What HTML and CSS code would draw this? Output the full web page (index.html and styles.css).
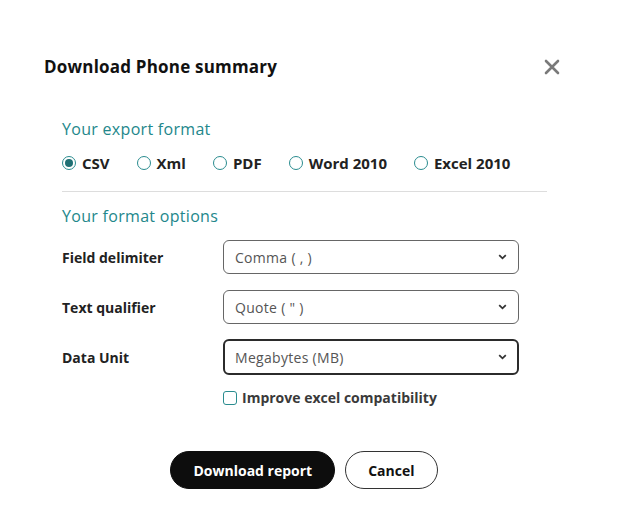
FILE: index.html
```html
<!DOCTYPE html>
<html lang="en">
<head>
    <meta charset="UTF-8">
    <meta name="viewport" content="width=device-width, initial-scale=1.0">
    <title>Download Phone summary</title>
    <link rel="stylesheet" href="styles.css">
</head>
<body>
    <div class="dialog">
        <div class="dialog-header">
            <h1>Download Phone summary</h1>
            <span class="close">
                <svg width="16" height="16" viewBox="0 0 16 16">
                    <path d="M2 2 L14 14 M14 2 L2 14" stroke="#7a7a7a" stroke-width="2.6" stroke-linecap="round"/>
                </svg>
            </span>
        </div>

        <div class="dialog-body">
            <h2>Your export format</h2>
            <div class="formats">
                <label class="radio checked"><span class="dot"></span>CSV</label>
                <label class="radio"><span class="dot"></span>Xml</label>
                <label class="radio"><span class="dot"></span>PDF</label>
                <label class="radio"><span class="dot"></span>Word 2010</label>
                <label class="radio"><span class="dot"></span>Excel 2010</label>
            </div>

            <hr class="divider">

            <h2>Your format options</h2>
            <div class="options">
                <div class="field">
                    <span class="field-label">Field delimiter</span>
                    <div class="select">
                        <span>Comma ( , )</span>
                        <svg width="9" height="6" viewBox="0 0 9 6"><path d="M1.2 1.2 L4.5 4.3 L7.8 1.2" fill="none" stroke="#333" stroke-width="1.8"/></svg>
                    </div>
                </div>
                <div class="field">
                    <span class="field-label">Text qualifier</span>
                    <div class="select">
                        <span>Quote ( " )</span>
                        <svg width="9" height="6" viewBox="0 0 9 6"><path d="M1.2 1.2 L4.5 4.3 L7.8 1.2" fill="none" stroke="#333" stroke-width="1.8"/></svg>
                    </div>
                </div>
                <div class="field">
                    <span class="field-label">Data Unit</span>
                    <div class="select focused">
                        <span>Megabytes (MB)</span>
                        <svg width="9" height="6" viewBox="0 0 9 6"><path d="M1.2 1.2 L4.5 4.3 L7.8 1.2" fill="none" stroke="#333" stroke-width="1.8"/></svg>
                    </div>
                </div>
                <label class="checkbox"><span class="box"></span>Improve excel compatibility</label>
            </div>
        </div>

        <div class="dialog-footer">
            <button class="btn primary">Download report</button>
            <button class="btn secondary">Cancel</button>
        </div>
    </div>
</body>
</html>
```

FILE: styles.css
```css
body {
    margin: 0;
    padding: 0;
    background-color: #fff;
    font-family: "Open Sans", Arial, sans-serif;
    color: #222;
}
.dialog {
    width: 516px;
    padding: 56px 0 0 44px;
}
.dialog-header {
    display: flex;
    justify-content: space-between;
    align-items: center;
}
.dialog-header h1 {
    margin: 0;
    font-size: 17px;
    line-height: 22px;
    font-weight: 700;
    letter-spacing: 0.2px;
    color: #111;
}
.close {
    display: flex;
    cursor: pointer;
}
.dialog-body {
    padding: 0 13px 0 18px;
}
.dialog-body h2 {
    margin: 0;
    font-size: 16px;
    line-height: 22px;
    font-weight: 400;
    letter-spacing: 0.3px;
    color: #23878b;
}
.dialog-body h2:first-child {
    margin-top: 40px;
}
.formats {
    display: flex;
    margin-top: 12px;
    height: 22px;
    align-items: center;
}
.radio {
    display: flex;
    align-items: center;
    font-size: 15px;
    font-weight: 700;
    color: #222;
    margin-right: 27px;
}
.radio .dot {
    width: 12px;
    height: 12px;
    border: 1px solid #2a8c8f;
    border-radius: 50%;
    margin-right: 6px;
    display: inline-flex;
    align-items: center;
    justify-content: center;
}
.radio.checked .dot::after {
    content: "";
    width: 8px;
    height: 8px;
    border-radius: 50%;
    background-color: #1f6f73;
}
.divider {
    border: none;
    border-top: 1px solid #ddd;
    margin: 17px 0 13px 0;
}
.options {
    display: flex;
    flex-direction: column;
    margin-top: 13px;
}
.field {
    display: flex;
    align-items: center;
    height: 34px;
    margin-bottom: 16px;
}
.field-label {
    width: 161px;
    font-size: 14px;
    font-weight: 700;
    color: #222;
}
.select {
    box-sizing: border-box;
    width: 296px;
    height: 34px;
    border: 1px solid #666;
    border-radius: 6px;
    display: flex;
    align-items: center;
    justify-content: space-between;
    padding: 0 11px 0 11px;
    font-size: 14px;
    color: #555;
    letter-spacing: 0.3px;
}
.select.focused {
    border: 2px solid #2b2b2b;
    height: 36px;
    padding-left: 10px;
    padding-right: 10px;
}
.checkbox {
    display: flex;
    align-items: center;
    margin-left: 161px;
    margin-top: -2px;
    font-size: 14px;
    font-weight: 700;
    color: #3a3a3a;
}
.checkbox .box {
    width: 12px;
    height: 12px;
    border: 1px solid #2a8c8f;
    border-radius: 3px;
    margin-right: 5px;
}
.dialog-footer {
    display: flex;
    justify-content: center;
    gap: 10px;
    margin-top: 44px;
    padding-left: 4px;
}
.btn {
    height: 38px;
    border-radius: 19px;
    font-family: "Open Sans", Arial, sans-serif;
    font-size: 14px;
    font-weight: 700;
    cursor: pointer;
    padding: 0 22px;
}
.btn.primary {
    background-color: #0d0d0d;
    color: #fff;
    border: 1px solid #0d0d0d;
}
.btn.secondary {
    background-color: #fff;
    color: #111;
    border: 1px solid #333;
}
```
